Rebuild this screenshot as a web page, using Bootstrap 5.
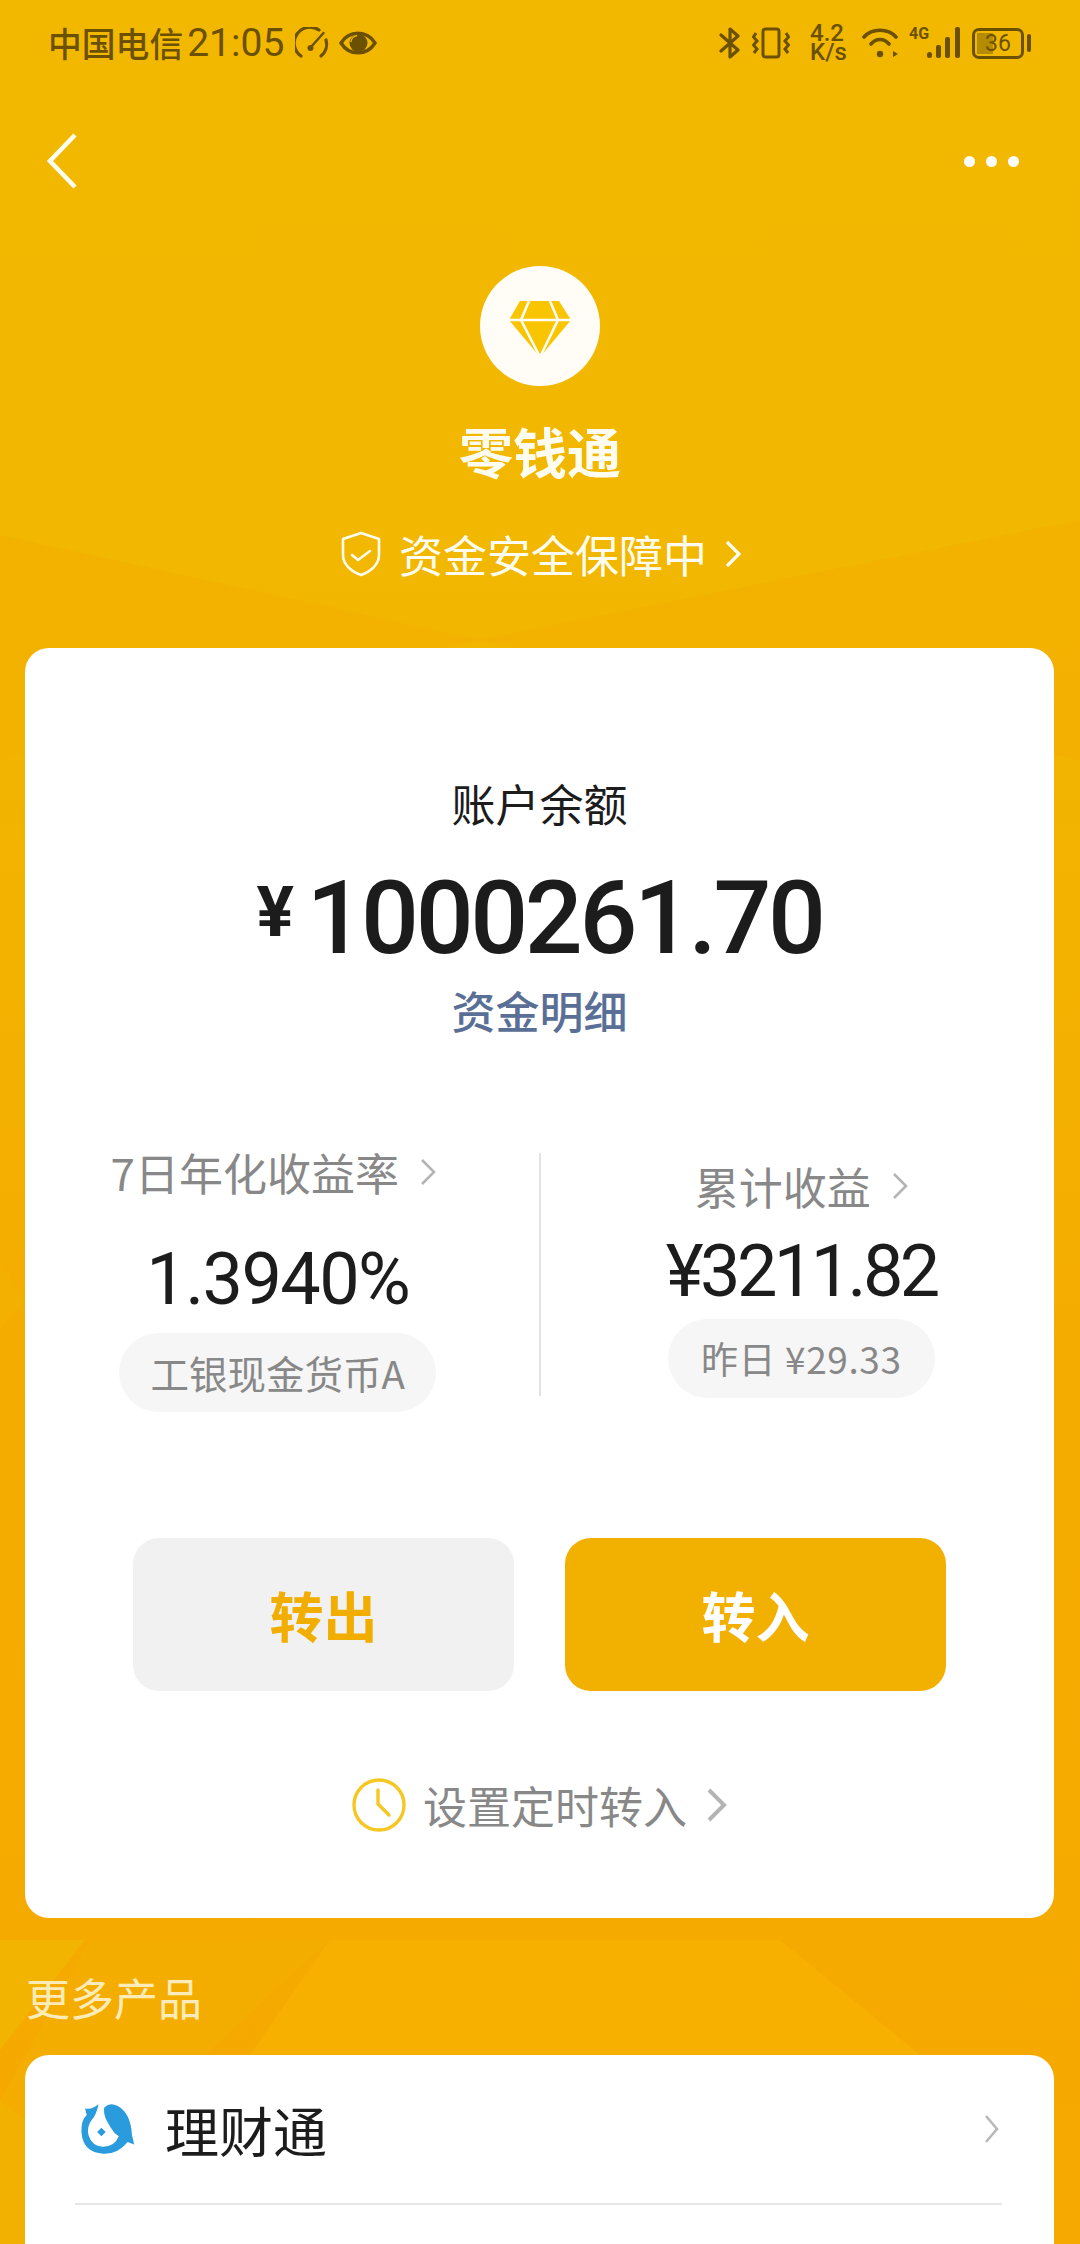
<!DOCTYPE html>
<html lang="zh-CN">
<head>
    <meta charset="UTF-8">
    <meta name="viewport" content="width=device-width, initial-scale=1.0">
    <title>零钱通</title>
    <link href="https://cdn.jsdelivr.net/npm/bootstrap@5.3.0/dist/css/bootstrap.min.css" rel="stylesheet">
    <style>
        body {
            width: 1080px;
            height: 2244px;
            overflow: hidden;
            position: relative;
            background: linear-gradient(180deg, #f2b800 0%, #f2b700 25%, #f4ac00 60%, #f6a900 100%);
            font-family: "Noto Sans CJK SC", "Liberation Sans", sans-serif;
        }
        .bg-shapes { position: absolute; left: 0; top: 0; z-index: 0; }
        .page { position: relative; z-index: 1; }
        .num { font-family: Roboto, "Liberation Sans", sans-serif; }

        .status-bar { height: 86px; padding: 0 49px 0 48px; color: #6b5000; }
        .carrier { font-size: 33.8px; line-height: 44px; font-weight: 500; }
        .clock-time { font-size: 39px; line-height: 44px; margin-left: 4px; }
        .gauge-icon { margin-left: 11px; }
        .eye-icon { margin-left: 10px; }
        .vib-icon { margin-left: 11px; }
        .net-speed { width: 34px; font-size: 24px; line-height: 19px; text-align: center; font-weight: 500; margin-left: 20px; white-space: nowrap; }
        .wifi-icon { margin-left: 18px; }
        .net-type { font-size: 16px; font-weight: 700; line-height: 15px; align-self: flex-start; margin: 26px 0 0 9px; width: 18px; }
        .battery { width: 52px; height: 31px; border: 3px solid #6b5000; border-radius: 7px; position: relative; font-size: 23px; line-height: 25px; text-align: center; margin-left: 12px; }
        .battery-fill { position: absolute; left: 2px; top: 2px; bottom: 2px; width: 16px; background: #b58c00; }
        .battery-num { position: relative; }
        .battery-nub { width: 4px; height: 18px; background: #6b5000; border-radius: 2px; margin-left: 3px; }

        .top-nav { height: 150px; padding: 0 61px 0 47px; }
        .nav-dots { gap: 11px; }
        .nav-dot { width: 11px; height: 11px; border-radius: 50%; background: #fff; }

        .logo-circle { width: 120px; height: 120px; border-radius: 50%; background: #fffdf5; margin: 30px auto 0; padding-top: 6px; }
        .hero-title { font-size: 54px; line-height: 70px; font-weight: 700; color: #fffdf0; margin-top: 30px; }
        .safe-row { font-size: 44px; line-height: 60px; color: #fffdf0; margin-top: 38px; padding-left: 3px; }
        .safe-shield { margin-right: 18px; }
        .safe-chev { margin-left: 17px; }

        .white-card { background: #fff; border-radius: 24px; margin: 0 26px 0 25px; }
        .main-card { margin-top: 64px; padding: 125px 0 83px; }
        .balance-label { font-size: 44px; line-height: 60px; color: #1c1c1c; }
        .balance-num { font-size: 102px; line-height: 110px; font-weight: 500; color: #1c1c1c; margin-top: 24px; letter-spacing: -3.4px; }
        .yen-big { font-size: 70px; vertical-align: 17px; margin-right: 16px; font-weight: 700; }
        .detail-link { font-size: 44px; line-height: 60px; color: #5a6f96; font-weight: 500; margin-top: 7px; }

        .stats-row { margin-top: 110px; gap: 8px; }
        .stat-col { flex: 1 1 0; }
        .stat-col-right { padding-top: 14px; }
        .divider-v { width: 2px; height: 243px; margin-top: 3px; background: #e2e2e2; }
        .stat-title { font-size: 44px; line-height: 44px; color: #888; }
        .stat-title-left { padding-right: 9px; }
        .stat-chev { margin-left: 21px; }
        .stat-val { font-size: 72px; line-height: 80px; color: #1c1c1c; }
        .stat-val-left { margin-top: 46px; letter-spacing: -1.6px; }
        .stat-val-right { margin-top: 24px; letter-spacing: -3.6px; }
        .stat-chip { display: inline-block; height: 79px; line-height: 79px; border-radius: 40px; background: #f6f6f6; color: #888; font-size: 38.5px; }
        .stat-chip-left { width: 317px; margin-top: 13px; }
        .stat-chip-right { width: 267px; margin-top: 7px; font-size: 37px; letter-spacing: .6px; }

        .action-row { margin-top: 126px; gap: 51px; }
        .action-btn { width: 381px; height: 153px; border: 0; border-radius: 26px; font-size: 54px; font-weight: 700; }
        .btn-out, .btn-out:hover { background: #f1f1f1; color: #f2ae00; }
        .btn-in, .btn-in:hover { background: #f2b000; color: #fff; }

        .timer-row { margin-top: 84px; font-size: 44px; line-height: 60px; color: #888; }
        .timer-icon { margin-right: 17px; }
        .timer-chev { margin-left: 20px; }
        .more-title { font-size: 44px; line-height: 60px; color: #fdebb8; margin: 49px 0 28px 26px; }
        .product-card { height: 260px; padding: 0 52px 0 50px; }
        .product-row { height: 150px; border-bottom: 2px solid #e6e6e6; padding: 0 3px 0 5px; }
        .product-icon { margin-right: 29px; }
        .product-name { font-size: 54px; color: #1c1c1c; }
    </style>
</head>
<body>
    <!-- faint polygons in the background -->
    <svg class="bg-shapes" width="1080" height="2244" viewBox="0 0 1080 2244">
        <polygon points="0,535 480,640 0,760" fill="#f4af00" opacity=".6"/>
        <polygon points="480,640 1080,520 1080,760" fill="#f4ab00" opacity=".5"/>
        <polygon points="0,1260 25,1300 0,1330" fill="#f2b400" opacity=".5"/>
        <polygon points="0,2100 90,1940 330,1940 0,2244" fill="#f2b000" opacity=".5"/>
        <polygon points="330,1940 780,1940 920,2055 250,2055" fill="#f7b000"/>
        <polygon points="85,1940 0,2050 0,1940" fill="#f3b400"/>
        <polygon points="0,2100 25,2120 25,2244 0,2244" fill="#f2b000"/>
    </svg>

    <div class="page">
        <div class="status-bar d-flex align-items-center">
            <span class="carrier">中国电信</span>
            <span class="clock-time num">21:05</span>
            <svg class="gauge-icon" width="34" height="32" viewBox="0 0 34 32" fill="none" stroke="#6b5000" stroke-width="3.2" stroke-linecap="round">
                <path d="M6 29 A15 15 0 0 1 24 3"/>
                <path d="M31 13 A15 15 0 0 1 26 29"/>
                <path d="M16 20 L28.5 6" stroke-width="2.4"/>
                <circle cx="15.5" cy="21" r="3" fill="#6b5000" stroke="none"/>
            </svg>
            <svg class="eye-icon" width="38" height="28" viewBox="0 0 38 28">
                <path d="M2 14 C10 1 28 1 36 14 C28 27 10 27 2 14 Z" fill="none" stroke="#6b5000" stroke-width="3.4"/>
                <circle cx="19.5" cy="14" r="9" fill="#6b5000"/>
                <path d="M12 13 A7 7 0 0 1 18 6.5 A7 7 0 0 0 12 13 Z" fill="#f2b800" stroke="#f2b800" stroke-width="1.4"/>
            </svg>
            <div class="flex-grow-1"></div>
            <svg width="22" height="34" viewBox="0 0 22 34" fill="none" stroke="#6b5000" stroke-width="3.2" stroke-linejoin="round" stroke-linecap="round">
                <path d="M2 9 L19 24 L11 31 V3 L19 10 L2 25"/>
            </svg>
            <svg class="vib-icon" width="38" height="32" viewBox="0 0 38 32" fill="none" stroke="#6b5000" stroke-width="3">
                <rect x="11" y="2" width="16" height="28" rx="2.5"/>
                <path d="M4 6 L1.5 10 L5 14 L1.5 18 L5 22 L2 26"/>
                <path d="M34 6 L36.5 10 L33 14 L36.5 18 L33 22 L36 26"/>
            </svg>
            <div class="net-speed num">4.2<br>K/s</div>
            <svg class="wifi-icon" width="38" height="32" viewBox="0 0 38 32" fill="none" stroke="#6b5000" stroke-width="3.6" stroke-linecap="round">
                <path d="M2 10 C10 1 26 1 34 10"/>
                <path d="M9 17 C14 11 22 11 27 17"/>
                <circle cx="18" cy="27" r="3.2" fill="#6b5000" stroke="none"/>
                <path d="M31 24 L36 27 L31 30 Z" fill="#6b5000" stroke="none"/>
            </svg>
            <span class="net-type num">4G</span>
            <svg width="33" height="32" viewBox="0 0 33 32" fill="#6b5000">
                <rect x="0" y="25" width="5" height="6" rx="2.5"/>
                <rect x="9" y="18" width="5" height="13" rx="2"/>
                <rect x="18" y="10" width="5" height="21" rx="2"/>
                <rect x="28" y="0" width="5" height="31" rx="2"/>
            </svg>
            <div class="battery num"><div class="battery-fill"></div><span class="battery-num">36</span></div>
            <div class="battery-nub"></div>
        </div>

        <div class="top-nav d-flex align-items-center justify-content-between">
            <svg width="30" height="56" viewBox="0 0 30 56" fill="none" stroke="#fffdf0" stroke-width="4.5">
                <path d="M28 2 L3 28 L28 54"/>
            </svg>
            <div class="nav-dots d-flex"><span class="nav-dot"></span><span class="nav-dot"></span><span class="nav-dot"></span></div>
        </div>

        <div class="logo-circle d-flex align-items-center justify-content-center">
            <svg width="62" height="56" viewBox="0 0 62 56">
                <polygon points="11,0 50,0 62,19 31,56 0,19" fill="#f9c400"/>
                <path d="M0 19 H62 M20 0 L12 19 L31 56 L49 19 L41 0" fill="none" stroke="#fffdf5" stroke-width="2.6"/>
            </svg>
        </div>
        <div class="hero-title text-center">零钱通</div>
        <div class="safe-row d-flex align-items-center justify-content-center">
            <svg class="safe-shield" width="40" height="46" viewBox="0 0 40 46" fill="none" stroke="#fffdf0" stroke-width="2.6" stroke-linejoin="round" stroke-linecap="round">
                <path d="M20 2 L38 8 V24 C38 34 29 41 20 44 C11 41 2 34 2 24 V8 Z"/>
                <path d="M11 24 L17 29 L29 20"/>
            </svg>
            <span>资金安全保障中</span>
            <svg class="safe-chev" width="18" height="30" viewBox="0 0 18 30" fill="none" stroke="#fffdf0" stroke-width="3.2">
                <path d="M3 3 L15 15 L3 27"/>
            </svg>
        </div>

        <div class="white-card main-card">
            <div class="balance-label text-center">账户余额</div>
            <div class="balance-num num text-center"><span class="yen-big">¥</span>1000261.70</div>
            <div class="detail-link text-center">资金明细</div>

            <div class="stats-row d-flex">
                <div class="stat-col text-center">
                    <div class="stat-title stat-title-left d-flex align-items-center justify-content-center">
                        <span>7日年化收益率</span>
                        <svg class="stat-chev" width="16" height="30" viewBox="0 0 16 30" fill="none" stroke="#b4b4b4" stroke-width="2.6"><path d="M2 3 L14 15 L2 27"/></svg>
                    </div>
                    <div class="stat-val stat-val-left num">1.3940%</div>
                    <div class="stat-chip stat-chip-left">工银现金货币A</div>
                </div>
                <div class="divider-v"></div>
                <div class="stat-col stat-col-right text-center">
                    <div class="stat-title d-flex align-items-center justify-content-center">
                        <span>累计收益</span>
                        <svg class="stat-chev" width="16" height="30" viewBox="0 0 16 30" fill="none" stroke="#b4b4b4" stroke-width="2.6"><path d="M2 3 L14 15 L2 27"/></svg>
                    </div>
                    <div class="stat-val stat-val-right num">¥3211.82</div>
                    <div class="stat-chip stat-chip-right">昨日 ¥29.33</div>
                </div>
            </div>

            <div class="action-row d-flex justify-content-center">
                <button type="button" class="btn action-btn btn-out">转出</button>
                <button type="button" class="btn action-btn btn-in">转入</button>
            </div>

            <div class="timer-row d-flex align-items-center justify-content-center">
                <svg class="timer-icon" width="54" height="54" viewBox="0 0 54 54" fill="none" stroke="#f5c722" stroke-width="3.4">
                    <circle cx="27" cy="27" r="25"/>
                    <path d="M26 12 V26 L37 37" stroke-linecap="round"/>
                </svg>
                <span>设置定时转入</span>
                <svg class="timer-chev" width="20" height="36" viewBox="0 0 20 36" fill="none" stroke="#b4b4b4" stroke-width="4"><path d="M2 3 L17 18 L2 33"/></svg>
            </div>
        </div>

        <div class="more-title">更多产品</div>

        <div class="white-card product-card">
            <div class="product-row d-flex align-items-center">
                <svg class="product-icon" width="56" height="54" viewBox="60 50 170 165">
                    <path d="M75 70 Q98 74 116 56 L122 70 L135 66 Q150 50 175 62 Q215 85 218 150 L225 180 L205 172 Q175 210 130 208 Q70 205 64 145 Q62 105 80 90 Z" fill="#2a9bdc"/>
                    <path d="M117 52 L134 62 Q130 85 140 105 Q150 125 165 145 Q172 150 178 155 Q165 187 130 187 Q95 185 85 150 Q80 125 95 105 Q110 90 117 52 Z" fill="#fff"/>
                    <path d="M125 129 L138 142 L125 155 L112 142 Z" fill="#2a9bdc"/>
                </svg>
                <span class="product-name">理财通</span>
                <svg class="ms-auto" width="15" height="30" viewBox="0 0 15 30" fill="none" stroke="#b9b9b9" stroke-width="2.6"><path d="M2 2 L13 15 L2 28"/></svg>
            </div>
        </div>
    </div>

    <script src="https://cdn.jsdelivr.net/npm/bootstrap@5.3.0/dist/js/bootstrap.bundle.min.js"></script>
</body>
</html>
